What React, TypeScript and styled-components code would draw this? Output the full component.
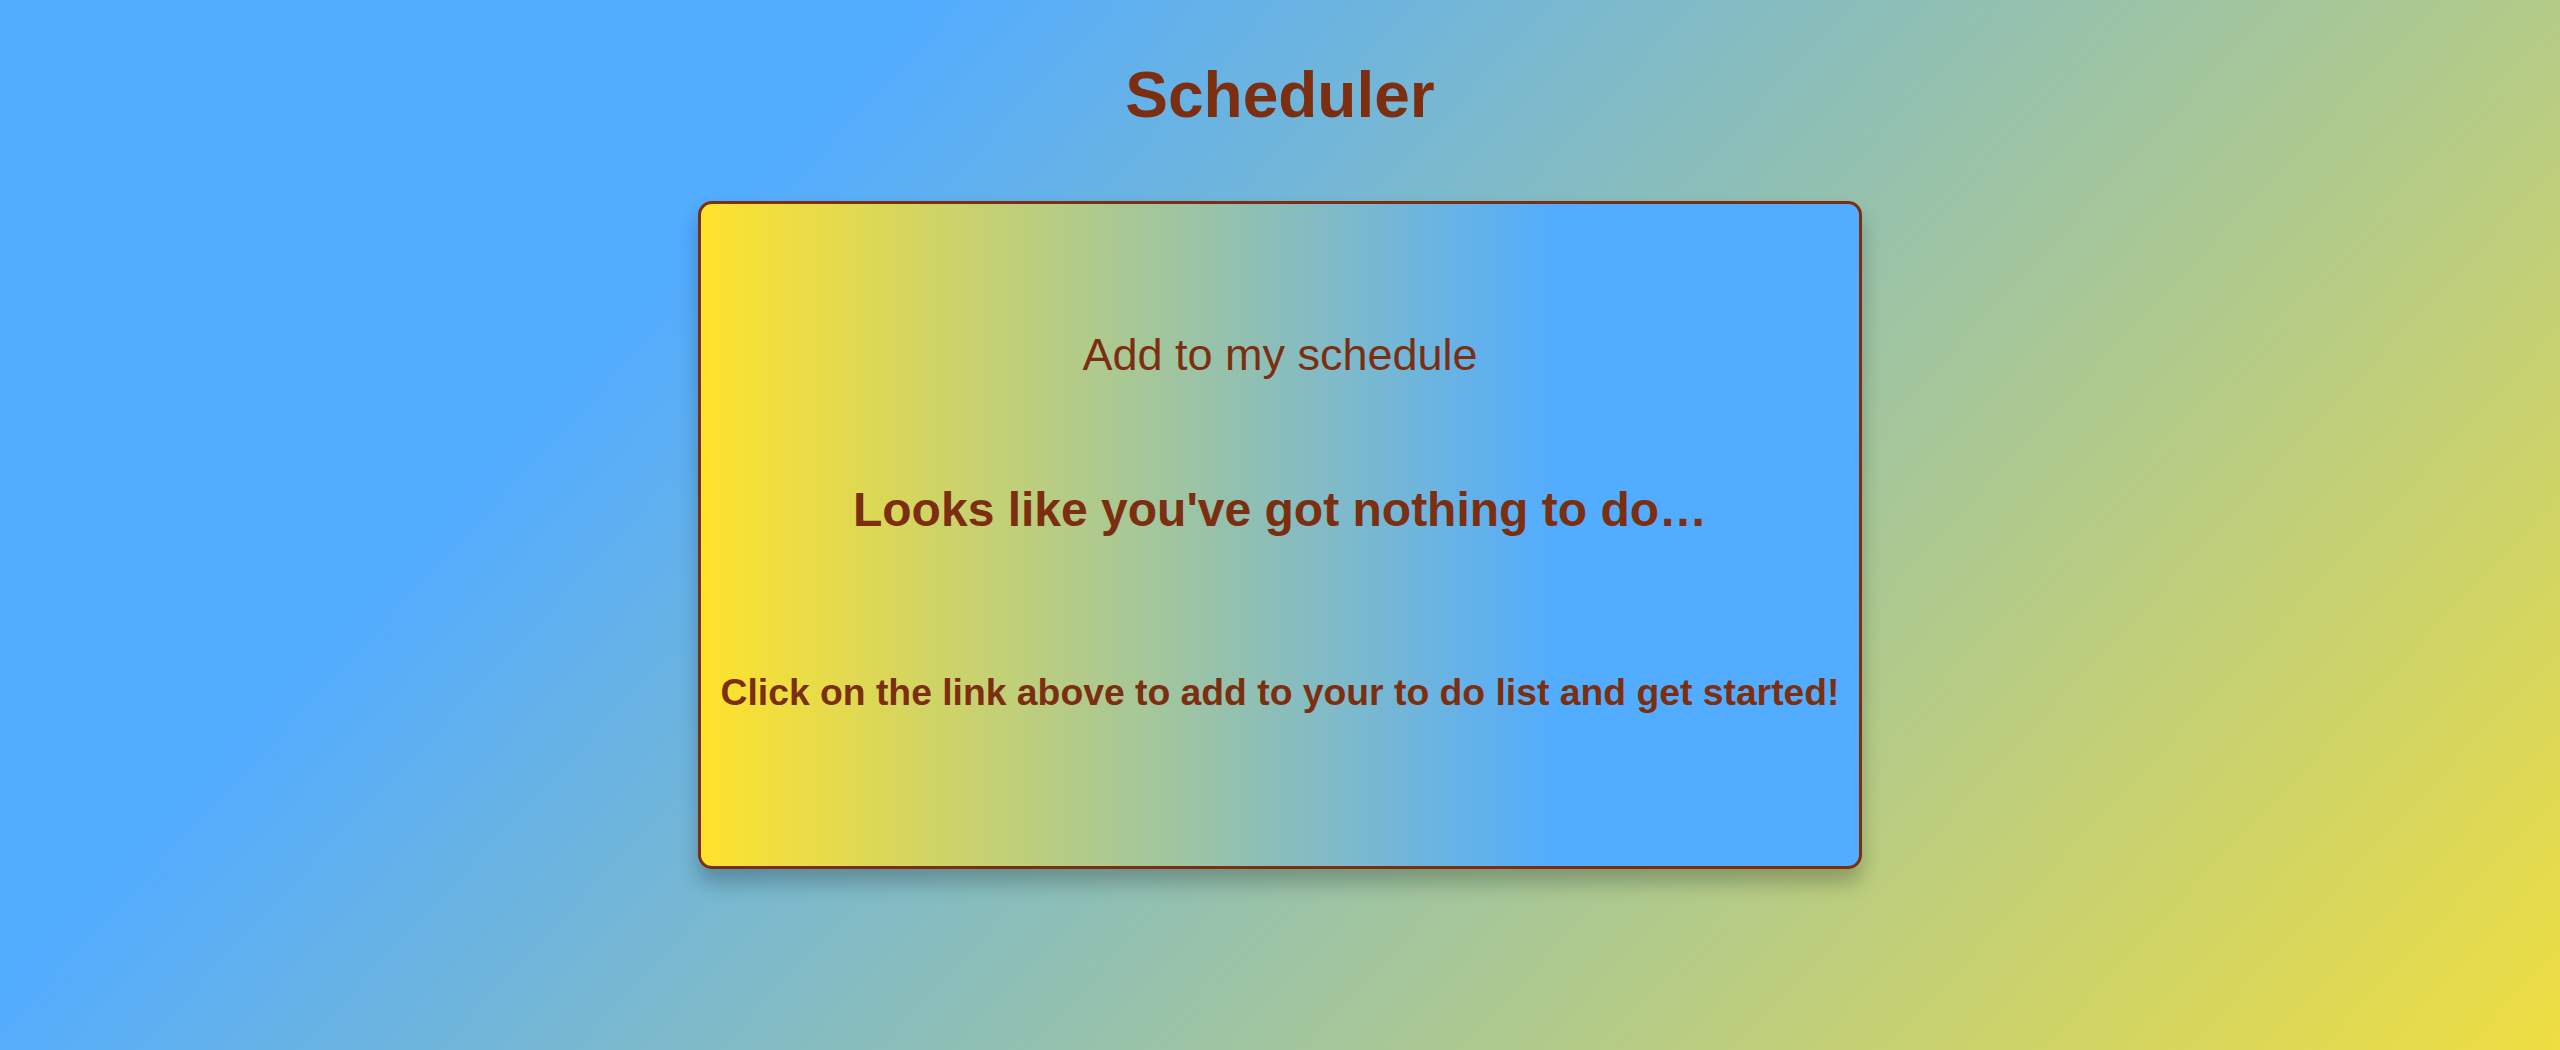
import React from "react";
import styled, { createGlobalStyle } from "styled-components";

const GlobalStyle = createGlobalStyle`
  html, body {
    margin: 0;
    padding: 0;
  }
  body {
    font-family: "Liberation Sans", Arial, Helvetica, sans-serif;
    color: #7c2f10;
  }
`;

const Page = styled.div`
  min-height: 100vh;
  box-sizing: border-box;
  display: flex;
  flex-direction: column;
  align-items: center;
  padding-top: 58px;
  background: linear-gradient(133deg, #52acff 26%, #ffe32c 108%);
`;

const Title = styled.h1`
  margin: 0;
  font-size: 64px;
  line-height: 74px;
  font-weight: 700;
`;

const Card = styled.section`
  box-sizing: border-box;
  width: 1164px;
  height: 668px;
  margin-top: 69px;
  padding-top: 125px;
  border: 3px solid #7c2f10;
  border-radius: 14px;
  background: linear-gradient(270deg, #52acff 26%, #ffe32c 100%);
  box-shadow: 0 14px 20px rgba(0, 0, 0, 0.24);
  display: flex;
  flex-direction: column;
  align-items: center;
  text-align: center;
`;

const AddLink = styled.a`
  font-size: 45px;
  line-height: 52px;
  font-weight: 400;
  color: #7c2f10;
  text-decoration: none;
  cursor: pointer;
`;

const Message = styled.h2<{ $size: number; $line: number; $gap: number }>`
  margin: ${(p) => p.$gap}px 0 0;
  font-size: ${(p) => p.$size}px;
  line-height: ${(p) => p.$line}px;
  font-weight: 700;
  white-space: nowrap;
`;

export default function App() {
  return (
    <>
      <GlobalStyle />
      <Page>
        <Title>Scheduler</Title>
        <Card>
          <AddLink>Add to my schedule</AddLink>
          <Message $size={48} $line={56} $gap={101}>
            Looks like you've got nothing to do…
          </Message>
          <Message $size={37.3} $line={44} $gap={132}>
            Click on the link above to add to your to do list and get started!
          </Message>
        </Card>
      </Page>
    </>
  );
}
